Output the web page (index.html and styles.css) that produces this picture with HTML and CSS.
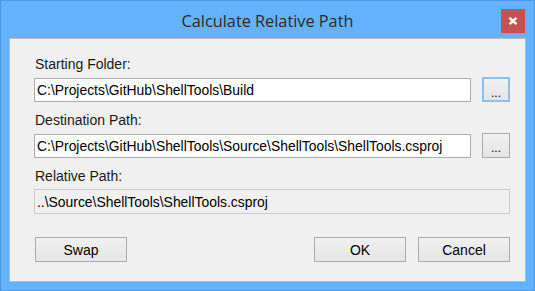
FILE: index.html
```html
<!DOCTYPE html>
<html lang="en">
<head>
    <meta charset="UTF-8">
    <title>Calculate Relative Path</title>
    <link rel="stylesheet" href="styles.css">
</head>
<body>
    <div class="window">
        <div class="titlebar">
            <span></span>
            <div class="title">Calculate Relative Path</div>
            <button class="close" title="Close">
                <svg width="10" height="8" viewBox="0 0 10 8">
                    <path d="M1.5 0.8 L8.5 7.2 M8.5 0.8 L1.5 7.2" stroke="#fff" stroke-width="2.4" fill="none"/>
                </svg>
            </button>
        </div>
        <div class="client">
            <label class="field-label" for="startFolder">Starting Folder:</label>
            <div class="field-row">
                <input class="textbox" id="startFolder" type="text" value="C:\Projects\GitHub\ShellTools\Build">
                <button class="btn btn-browse focused">...</button>
            </div>
            <label class="field-label" for="destPath">Destination Path:</label>
            <div class="field-row">
                <input class="textbox" id="destPath" type="text" value="C:\Projects\GitHub\ShellTools\Source\ShellTools\ShellTools.csproj">
                <button class="btn btn-browse">...</button>
            </div>
            <label class="field-label" for="relPath">Relative Path:</label>
            <input class="textbox readonly" id="relPath" type="text" readonly value="..\Source\ShellTools\ShellTools.csproj">
            <div class="actions">
                <button class="btn btn-cmd">Swap</button>
                <span class="spacer"></span>
                <button class="btn btn-cmd">OK</button>
                <button class="btn btn-cmd">Cancel</button>
            </div>
        </div>
    </div>
</body>
</html>
```

FILE: styles.css
```css
body {
    margin: 0;
    font-family: 'Liberation Sans', Arial, sans-serif;
}
.window {
    width: 535px;
    height: 291px;
    box-sizing: border-box;
    border: 1px solid #4a97e4;
    background: #63b2fb;
    padding: 0 8px 8px 8px;
    display: flex;
    flex-direction: column;
}
.titlebar {
    height: 37px;
    box-sizing: border-box;
    padding-top: 8px;
    display: grid;
    grid-template-columns: 1fr auto 1fr;
    align-items: start;
}
.title {
    font-family: 'Open Sans', 'Noto Sans', sans-serif;
    font-size: 16.3px;
    line-height: 24px;
    color: #2b2b2b;
}
.close {
    justify-self: end;
    margin-right: 1px;
    width: 24px;
    height: 24px;
    border: none;
    padding: 0;
    background: #c75050;
    display: flex;
    align-items: center;
    justify-content: center;
}
.client {
    flex: 1;
    background: #f0f0f0;
    border: 1px solid #b9b9b9;
    padding: 17px 15px 0 24px;
    display: flex;
    flex-direction: column;
}
.field-label {
    font-size: 14px;
    line-height: 16px;
    color: #1a1a1a;
    padding-left: 1px;
}
.field-row {
    display: grid;
    grid-template-columns: 1fr 28px;
    column-gap: 11px;
    align-items: start;
    margin-top: 5px;
    margin-bottom: 10px;
}
.textbox {
    height: 24px;
    box-sizing: border-box;
    border: 1px solid #adadad;
    background: #fff;
    padding: 0 2px;
    font-family: 'Liberation Sans', Arial, sans-serif;
    font-size: 13.9px;
    color: #000;
    margin: 0;
    outline: none;
}
.field-row .textbox {
    margin-top: 1px;
}
.textbox.readonly {
    background: #f0f0f0;
    border-color: #cbcbcb;
    margin-top: 5px;
    height: 25px;
}
.btn {
    box-sizing: border-box;
    border: 1px solid #acacac;
    background: linear-gradient(#f0f0f0, #e5e5e5);
    font-family: 'Liberation Sans', Arial, sans-serif;
    font-size: 14px;
    color: #000;
    padding: 0;
    margin: 0;
}
.btn-browse {
    height: 25px;
    line-height: 25px;
    font-size: 12px;
    padding-top: 2px;
}
.btn-browse.focused {
    border: 2px solid #8cc0f2;
}
.actions {
    display: flex;
    gap: 12px;
    margin-top: 23px;
    padding-left: 1px;
}
.spacer {
    flex: 1;
}
.btn-cmd {
    width: 92px;
    height: 25px;
}
```
